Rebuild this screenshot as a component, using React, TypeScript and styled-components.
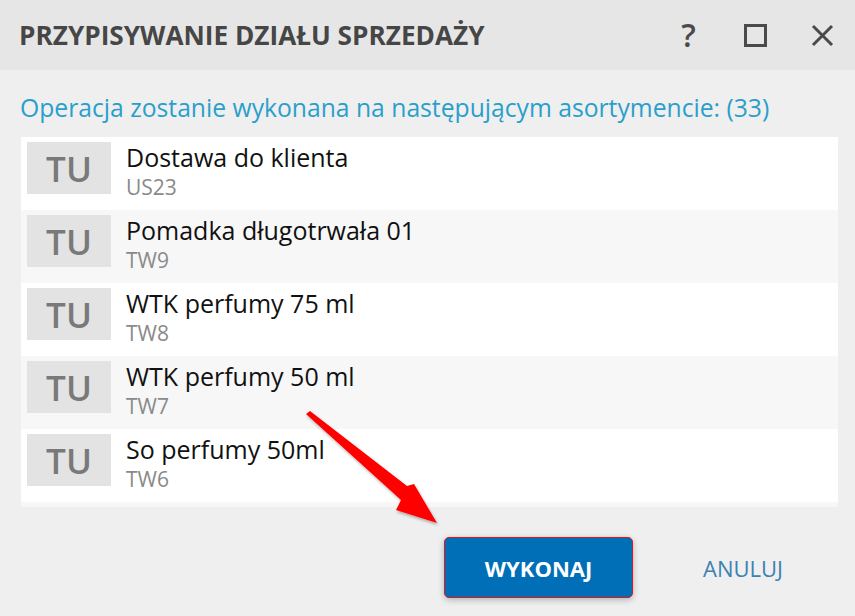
import styled, { createGlobalStyle } from 'styled-components'

const GlobalStyle = createGlobalStyle`
  html, body {
    margin: 0;
    padding: 0;
    background: #efefef;
  }
  body {
    font-family: 'Open Sans', 'Noto Sans', sans-serif;
  }
`

const Dialog = styled.div`
  position: relative;
  width: 855px;
  height: 616px;
  background: #efefef;
  overflow: hidden;
  display: flex;
  flex-direction: column;
`

const Header = styled.div`
  height: 70px;
  background: #e6e6e6;
  display: flex;
  align-items: center;
  padding: 0 21px 0 19px;
  flex-shrink: 0;
`

const Title = styled.h1`
  margin: 0;
  flex: 1;
  font-size: 26.2px;
  font-weight: 700;
  color: #464646;
`

const HeaderIcons = styled.div`
  display: flex;
  align-items: center;
  gap: 44px;
`

const IconButton = styled.button`
  border: 0;
  background: none;
  padding: 0;
  width: 23px;
  height: 24px;
  display: flex;
  align-items: center;
  justify-content: center;
  color: #4a4a4a;
  font-family: 'Open Sans', sans-serif;
  font-size: 32px;
  font-weight: 600;
  line-height: 1;
`

const Body = styled.div`
  flex: 1;
  padding: 22px 17px 0 21px;
  display: flex;
  flex-direction: column;
`

const Subtitle = styled.div`
  font-size: 24.7px;
  color: #2a9fcb;
  line-height: 32px;
  margin-bottom: 13px;
  margin-left: -1px;
`

const List = styled.div`
  height: 370px;
  overflow: hidden;
  background: #f7f7f7;
`

const Row = styled.div<{ $alt: boolean }>`
  height: 73px;
  box-sizing: border-box;
  display: flex;
  align-items: flex-start;
  padding: 5px 6px 0;
  gap: 15px;
  background: ${(p) => (p.$alt ? '#f7f7f7' : '#ffffff')};
`

const Thumb = styled.div`
  width: 84px;
  height: 52px;
  background: #e3e3e3;
  color: #797979;
  font-size: 35px;
  font-weight: 600;
  display: flex;
  align-items: center;
  justify-content: center;
  flex-shrink: 0;
`

const Info = styled.div`
  display: flex;
  flex-direction: column;
`

const Name = styled.div`
  font-size: 25px;
  color: #111;
  line-height: 31px;
`

const Code = styled.div`
  font-size: 21px;
  color: #8a8a8a;
  line-height: 28px;
`

const Footer = styled.div`
  display: flex;
  justify-content: flex-end;
  align-items: center;
  padding: 30px 55px 0 0;
  gap: 70px;
`

const PrimaryButton = styled.button`
  width: 189px;
  height: 61px;
  background: #006fb7;
  border: 1.5px solid #e3141b;
  border-radius: 5px;
  color: #fff;
  font-family: 'Open Sans', sans-serif;
  font-size: 22px;
  font-weight: 700;
  box-shadow: 0 2px 6px rgba(0, 0, 0, 0.25);
`

const TextButton = styled.button`
  border: 0;
  background: none;
  color: #3b82b4;
  font-family: 'Open Sans', sans-serif;
  font-size: 22px;
  padding: 0;
`

const Arrow = styled.svg`
  position: absolute;
  left: 0;
  top: 0;
  pointer-events: none;
`

const items = [
  { name: 'Dostawa do klienta', code: 'US23' },
  { name: 'Pomadka długotrwała 01', code: 'TW9' },
  { name: 'WTK perfumy 75 ml', code: 'TW8' },
  { name: 'WTK perfumy 50 ml', code: 'TW7' },
  { name: 'So perfumy 50ml', code: 'TW6' },
]

export default function App() {
  return (
    <>
      <GlobalStyle />
      <Dialog>
        <Header>
          <Title>PRZYPISYWANIE DZIAŁU SPRZEDAŻY</Title>
          <HeaderIcons>
            <IconButton>?</IconButton>
            <IconButton>
              <svg width="23" height="23" viewBox="0 0 23 23">
                <rect x="1.5" y="1.5" width="20" height="20" fill="none" stroke="#4a4a4a" strokeWidth="3" />
              </svg>
            </IconButton>
            <IconButton>
              <svg width="23" height="23" viewBox="0 0 23 23">
                <path d="M2 2 L21 21 M21 2 L2 21" stroke="#4a4a4a" strokeWidth="3" />
              </svg>
            </IconButton>
          </HeaderIcons>
        </Header>
        <Body>
          <Subtitle>Operacja zostanie wykonana na następującym asortymencie: (33)</Subtitle>
          <List>
            {items.map((it, i) => (
              <Row key={it.code} $alt={i % 2 === 1}>
                <Thumb>TU</Thumb>
                <Info>
                  <Name>{it.name}</Name>
                  <Code>{it.code}</Code>
                </Info>
              </Row>
            ))}
          </List>
          <Footer>
            <PrimaryButton>WYKONAJ</PrimaryButton>
            <TextButton>ANULUJ</TextButton>
          </Footer>
        </Body>
        <Arrow width="855" height="616" viewBox="0 0 855 616">
          <defs>
            <filter id="sh" x="-20%" y="-20%" width="140%" height="140%">
              <feDropShadow dx="1" dy="2" stdDeviation="1.5" floodColor="#000" floodOpacity="0.3" />
            </filter>
          </defs>
          <polygon
            points="306,414 310,411 407,486 414,484 437,523 396,510 401,500"
            fill="#ff0000"
            filter="url(#sh)"
          />
        </Arrow>
      </Dialog>
    </>
  )
}
